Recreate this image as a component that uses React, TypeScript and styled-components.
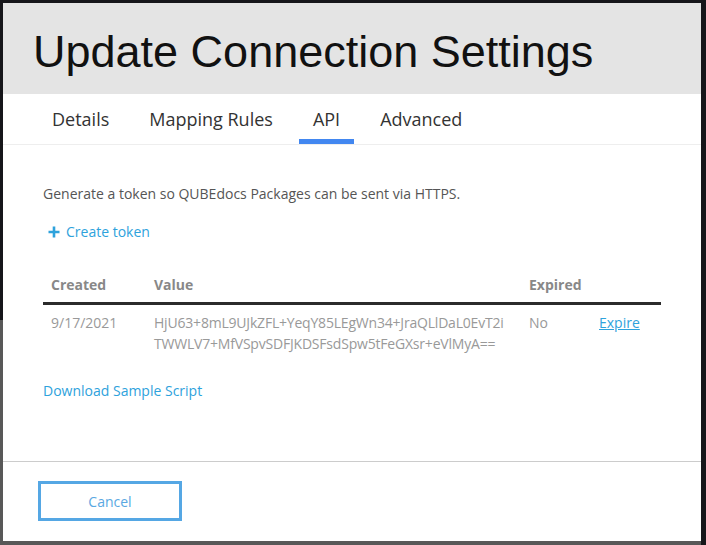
import React from 'react';
import styled, { createGlobalStyle } from 'styled-components';

const GlobalStyle = createGlobalStyle`
  html, body {
    margin: 0;
    padding: 0;
  }
  body {
    width: 706px;
    height: 545px;
    overflow: hidden;
    background:
      linear-gradient(to right, transparent 0, transparent 701px, #16161a 701px),
      linear-gradient(to bottom, #16161a 0, #16161a 320px, #585858 320px);
    font-family: 'Open Sans', 'Noto Sans', sans-serif;
  }
`;

const Backdrop = styled.div`
  padding: 3px 5px 4px 3px;
`;

const Modal = styled.div`
  width: 698px;
  height: 538px;
  background: #fff;
  display: flex;
  flex-direction: column;
`;

const Header = styled.div`
  background: #e4e4e4;
  height: 91px;
  display: flex;
  align-items: center;
  padding-left: 30px;
`;

const Title = styled.h1`
  margin: 0;
  font-family: 'Liberation Sans', Arial, sans-serif;
  font-weight: 400;
  font-size: 45px;
  color: #111;
  padding-top: 6px;
`;

const TabBar = styled.div`
  display: flex;
  gap: 12px;
  padding: 0 35px;
  height: 50px;
  border-bottom: 1px solid #eeeeee;
`;

const Tab = styled.div<{ $active?: boolean }>`
  display: flex;
  align-items: center;
  padding: 4px 14px 0;
  font-size: 18px;
  color: #333;
  border-bottom: 5px solid ${({ $active }) => ($active ? '#4287f0' : 'transparent')};
`;

const Body = styled.div`
  flex: 1;
  padding: 39px 40px 0;
`;

const Intro = styled.p`
  margin: 0;
  font-size: 14px;
  line-height: 20px;
  color: #555;
`;

const LinkButton = styled.a`
  display: inline-flex;
  align-items: center;
  gap: 6px;
  margin-top: 18px;
  margin-left: 5px;
  font-size: 14px;
  line-height: 20px;
  color: #2ea2dc;
  cursor: pointer;
`;

const Table = styled.table`
  width: 618px;
  table-layout: fixed;
  margin-top: 27px;
  border-collapse: collapse;
  font-size: 14px;
  line-height: 21px;
`;

const Th = styled.th`
  text-align: left;
  font-weight: 700;
  color: #888;
  padding: 4px 8px 7px;
  border-bottom: 3px solid #2b2b2b;
`;

const Td = styled.td`
  vertical-align: top;
  color: #999;
  padding: 7px 8px 8px;
`;

const ValueCell = styled(Td)`
  word-break: break-all;
  letter-spacing: -0.2px;
  padding-right: 14px;
`;

const ExpireLink = styled.a`
  color: #2ea2dc;
  text-decoration: underline;
  cursor: pointer;
`;

const DownloadLink = styled.a`
  display: block;
  margin-top: 19px;
  font-size: 14px;
  line-height: 20px;
  color: #2ea2dc;
  cursor: pointer;
`;

const Footer = styled.div`
  border-top: 1px solid #cccccc;
  padding: 19px 35px 20px;
`;

const CancelButton = styled.button`
  width: 144px;
  height: 40px;
  background: #fff;
  border: 3px solid #55a7e4;
  color: #5aa8e2;
  font-family: 'Open Sans', 'Noto Sans', sans-serif;
  font-size: 14px;
  cursor: pointer;
`;

const PlusIcon = () => (
  <svg width="12" height="12" viewBox="0 0 12 12">
    <path d="M6 0.5v11M0.5 6h11" stroke="#2ea2dc" strokeWidth="2.6" />
  </svg>
);

const tabs = ['Details', 'Mapping Rules', 'API', 'Advanced'];
const colWidths = [103, 375, 70, 70];

export default function App() {
  return (
    <>
      <GlobalStyle />
      <Backdrop>
        <Modal>
          <Header>
            <Title>Update Connection Settings</Title>
          </Header>
          <TabBar>
            {tabs.map((t) => (
              <Tab key={t} $active={t === 'API'}>
                {t}
              </Tab>
            ))}
          </TabBar>
          <Body>
            <Intro>Generate a token so QUBEdocs Packages can be sent via HTTPS.</Intro>
            <LinkButton>
              <PlusIcon />
              Create token
            </LinkButton>
            <Table>
              <colgroup>
                {colWidths.map((w, i) => (
                  <col key={i} style={{ width: w }} />
                ))}
              </colgroup>
              <thead>
                <tr>
                  <Th>Created</Th>
                  <Th>Value</Th>
                  <Th>Expired</Th>
                  <Th />
                </tr>
              </thead>
              <tbody>
                <tr>
                  <Td>9/17/2021</Td>
                  <ValueCell>
                    HjU63+8mL9UJkZFL+YeqY85LEgWn34+JraQLlDaL0EvT2iTWWLV7+MfVSpvSDFJKDSFsdSpw5tFeGXsr+eVlMyA==
                  </ValueCell>
                  <Td>No</Td>
                  <Td>
                    <ExpireLink>Expire</ExpireLink>
                  </Td>
                </tr>
              </tbody>
            </Table>
            <DownloadLink>Download Sample Script</DownloadLink>
          </Body>
          <Footer>
            <CancelButton>Cancel</CancelButton>
          </Footer>
        </Modal>
      </Backdrop>
    </>
  );
}
